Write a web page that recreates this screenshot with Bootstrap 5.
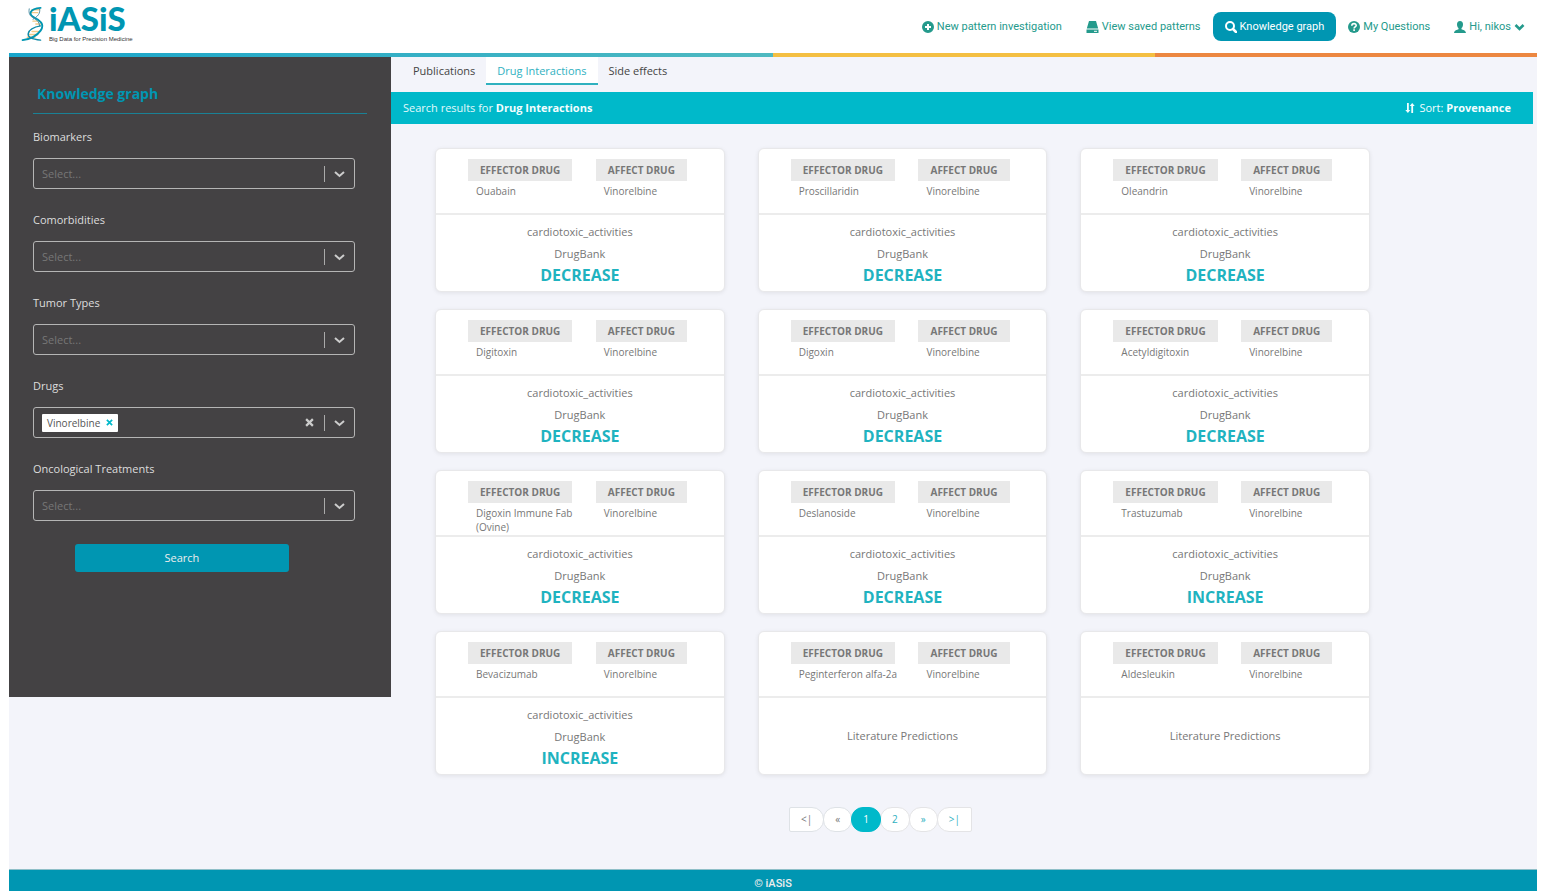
<!DOCTYPE html>
<html lang="en">
<head>
<meta charset="utf-8">
<meta name="viewport" content="width=device-width, initial-scale=1">
<title>iASiS - Knowledge graph</title>
<link rel="stylesheet" href="https://cdn.jsdelivr.net/npm/bootstrap@5.3.0/dist/css/bootstrap.min.css">
<style>
  :root { --deep: #0096b2; --aqua: #00b9ca; --page: #f3f4fa; --slate: #444244; }
  body { font-family: "Open Sans", sans-serif; font-size: 11px; line-height: 18px; color: #777; background: #fff; padding: 0 5px 5px 9px; }
  svg { flex: none; }
  svg:not([fill]) { fill: currentColor; }

  .topbar { height: 53px; }
  .brand { color: var(--deep); text-decoration: none; margin: 2px 0 0 12px; }
  .brand-name { font: 900 33px/33px Lato, sans-serif; }
  .brand-sub { font: 6px/8px "Liberation Sans Narrow", "Liberation Sans", sans-serif; color: #333; }
  .topnav .nav-link { display: flex; align-items: center; gap: 3px; height: 29px; padding: 0 12px; color: #249a8c; font: 11px/16px Roboto, sans-serif; }
  .topnav .nav-link.active { background: var(--deep); color: #fff; border-radius: 8px; }
  .stripe { height: 4px; }
  .stripe-a { background: linear-gradient(90deg, #18a5cb, #4fb9c0); }
  .stripe-b { background: #f4bf42; }
  .stripe-c { background: #ec8741; }

  .layout { background: var(--page); min-height: 812px; }
  .sidebar { background: var(--slate); min-height: 640px; padding: 24px 24px 0; color: #ddd; }
  .sidebar h1 { font-size: 14px; line-height: 26px; font-weight: 700; color: var(--deep); border-bottom: 1px solid #1a8196; padding: 0 4px 6px; margin: 0 0 14px; }
  .field { margin: 0 12px 22px 0; }
  .field label { line-height: 18px; margin-bottom: 12px; }
  .picker { height: 31px; border: 1px solid #b5b5b5; border-radius: 3px; background-color: transparent; color: #777; font-size: 11px; line-height: 18px;
    background-image: url("data:image/svg+xml,%3Csvg xmlns='http://www.w3.org/2000/svg' width='30' height='16'%3E%3Cpath d='M.5 0v16' stroke='%23aaa'/%3E%3Cpath d='M11 6l4.500 4 4.500-4' fill='none' stroke='%23ccc' stroke-width='2'/%3E%3C/svg%3E");
    background-size: 30px 16px; background-position: right 0 center; background-repeat: no-repeat; }
  select.picker { padding: 0 40px 0 8px; }
  .picker-multi { padding: 0 10px 0 8px; }
  .picker-multi input { width: 0; min-width: 0; background: none; border: 0; outline: 0; color: #ddd; }
  .chip { background: #fff; color: #555; font-size: 10px; line-height: 18px; border-radius: 1px; padding: 0 5px; gap: 6px; }
  .bare { background: none; border: 0; padding: 0; color: inherit; display: flex; }
  .chip .bare { color: var(--aqua); }
  .clear { margin-right: 30px; color: #ccc; }
  .btn-search { width: 64%; margin: 23px auto 0 42px; height: 28px; padding: 0; font-size: 11px; line-height: 18px; border-radius: 3px; background: var(--deep); color: #eee; }

  .tabs { padding-left: 12px; margin-bottom: 7px; }
  .tabs .nav-link { padding: 5px 11px 3px; height: 28px; color: #444; border-radius: 0; }
  .tabs .nav-item:first-child .nav-link { padding-left: 10px; }
  .tabs .nav-link.active { background: #fff; color: #2fb1bf; border-bottom: 2px solid #2fb1bf; padding-bottom: 1px; }
  .results-bar { background: var(--aqua); color: #e2fafc; height: 32px; margin-right: 4px; padding: 0 22px 0 12px; }
  .results-bar b, .results-bar .bare { color: #f2feff; }

  .results { padding-right: 167px; }
  .tiles { display: grid; grid-template-columns: repeat(3, minmax(0, 1fr)); gap: 17px 33px; margin: 24px 0 32px 44px; }
  .tile { height: 144px; border: 1px solid #e8e8ea; border-radius: 6px; box-shadow: 0 1px 4px rgba(0, 0, 0, .08); }
  .pair { display: grid; grid-template-columns: 1fr 1fr; height: 66px; padding: 10px 0 0 32px; border-bottom: 2px solid #ececec; }
  .tag { display: inline-block; background: #e9e9e9; font-size: 10px; font-weight: 700; line-height: 22px; padding: 0 12px; }
  .drug { font-size: 10px; line-height: 14px; padding: 3px 10px 0 8px; }
  .relation { line-height: 22px; }
  .effect { font-size: 16px; line-height: 20px; font-weight: 700; color: #1fb3c0; }

  .pagination { --bs-pagination-font-size: 10px; --bs-pagination-color: #2fb1bf; --bs-pagination-border-color: #e4e4e6; }
  .pagination .page-link { height: 25px; line-height: 23px; padding: 0 11px; border-radius: 12px; }
  .pagination .page-item:first-child .page-link { border-radius: 2px 12px 12px 2px; }
  .pagination .page-item:last-child .page-link { border-radius: 12px 2px 2px 12px; }
  .pagination .disabled .page-link { background: #fff; color: #777; }
  .pagination .active .page-link { background: var(--aqua); border-color: var(--aqua); }

  footer { background: var(--deep); border-top: 1px solid #8fbfc8; color: #eee; font: 500 11px/21px Roboto, sans-serif; height: 22px; padding-top: 3px; overflow: hidden; }
</style>
</head>
<body>
<header>
  <div class="topbar d-flex justify-content-between align-items-start">
    <a class="brand d-flex gap-1" href="#" aria-label="iASiS home">
      <svg class="mt-1" width="24" height="36" viewBox="0 0 24 38" fill="none" stroke-linecap="round">
        <g stroke="#f2c987" stroke-width="1.500"><path d="M11 4h8M10 7h7M12 16h7M15 19h5M11 27h7M8 30h9M6 33h8"/></g>
        <path d="M20 2C8 3 7 9 13 12s12 7 7 14S9 35 1 36" stroke="#0096b2" stroke-width="2"/>
        <path d="M8 3c-1 5 1 8 5 10s6 5 6 8M19 3c1 5-2 8-7 11" stroke="#4c8ea3" stroke-width="1"/>
        <path d="M20 21C14 22 8 25 7 29s4 6 13 7" stroke="#0f8aa8" stroke-width="1.500"/>
      </svg>
      <span class="d-flex flex-column"><span class="brand-name">iASiS</span><span class="brand-sub">Big Data for Precision Medicine</span></span>
    </a>
    <nav aria-label="Main">
      <ul class="nav topnav mt-2 pt-1 flex-nowrap text-nowrap">
        <li class="nav-item"><a class="nav-link" href="#"><svg width="12" height="12" viewBox="0 0 12 12"><path fill-rule="evenodd" d="M6 0a6 6 0 1 0 0 12A6 6 0 0 0 6 0zM5 3h2v2h2v2H7v2H5V7H3V5h2z"/></svg>New pattern investigation</a></li>
        <li class="nav-item"><a class="nav-link" href="#"><svg width="13" height="12" viewBox="0 0 12 12"><path d="M2.500 0h7l2.200 7.500H.3zM0 8.500h12V12H0z"/><path d="M7.500 10.300h3" stroke="#fff"/></svg>View saved patterns</a></li>
        <li class="nav-item"><a class="nav-link active" aria-current="page" href="#"><svg width="12" height="12" viewBox="0 0 12 12" fill="none" stroke="currentColor"><circle cx="5" cy="5" r="4" stroke-width="2"/><path d="M8 8l3 3" stroke-width="2.500" stroke-linecap="round"/></svg>Knowledge graph</a></li>
        <li class="nav-item"><a class="nav-link" href="#"><svg width="12" height="12" viewBox="0 0 12 12"><circle cx="6" cy="6" r="6"/><path d="M3.800 4.700C3.800 2 8.300 2 8.200 4.500 8.200 6 6.100 5.900 6.100 7.500M6.100 8.300v1.600" fill="none" stroke="#fff" stroke-width="1.600"/></svg>My Questions</a></li>
        <li class="nav-item"><a class="nav-link" href="#"><svg width="12" height="12" viewBox="0 0 12 12"><path d="M6 0c2 0 3 1.300 3 3.200 0 1.700-.5 3-1.500 3.900v1.200c1.500.7 4 1 4.500 3.700H0c.5-2.700 3-3 4.500-3.700V7.100C3.500 6.200 3 4.900 3 3.200 3 1.300 4 0 6 0z"/></svg>Hi, nikos<svg width="11" height="8" viewBox="0 0 10 8"><path d="M1 2l4 4 4-4" fill="none" stroke="currentColor" stroke-width="2.600"/></svg></a></li>
      </ul>
    </nav>
  </div>
  <div class="stripe d-flex"><div class="stripe-a w-50"></div><div class="stripe-b w-25"></div><div class="stripe-c w-25"></div></div>
</header>

<div class="layout row g-0 align-items-start">
  <aside class="sidebar col-3">
    <h1>Knowledge graph</h1>
    <form>
      <div class="field"><label class="d-block" for="biomarkers">Biomarkers</label><select class="form-select picker" id="biomarkers"><option>Select...</option></select></div>
      <div class="field"><label class="d-block" for="comorbidities">Comorbidities</label><select class="form-select picker" id="comorbidities"><option>Select...</option></select></div>
      <div class="field"><label class="d-block" for="tumors">Tumor Types</label><select class="form-select picker" id="tumors"><option>Select...</option></select></div>
      <div class="field"><label class="d-block" for="drugs">Drugs</label>
        <div class="picker picker-multi d-flex align-items-center">
          <span class="chip d-flex align-items-center">Vinorelbine<button class="bare" type="button" aria-label="Remove Vinorelbine"><svg width="7" height="7" viewBox="0 0 8 8"><path d="M1 1l6 6M7 1L1 7" stroke="currentColor" stroke-width="2"/></svg></button></span>
          <input class="flex-grow-1" id="drugs" type="text">
          <button class="bare clear" type="button" aria-label="Clear"><svg width="9" height="9" viewBox="0 0 8 8"><path d="M1 1l6 6M7 1L1 7" stroke="currentColor" stroke-width="2"/></svg></button>
        </div>
      </div>
      <div class="field"><label class="d-block" for="treatments">Oncological Treatments</label><select class="form-select picker" id="treatments"><option>Select...</option></select></div>
      <button class="btn btn-search d-block" type="submit">Search</button>
    </form>
  </aside>

  <main class="col-9">
    <ul class="nav tabs">
      <li class="nav-item"><a class="nav-link" href="#">Publications</a></li>
      <li class="nav-item"><a class="nav-link active" aria-current="page" href="#">Drug Interactions</a></li>
      <li class="nav-item"><a class="nav-link" href="#">Side effects</a></li>
    </ul>
    <div class="results-bar d-flex justify-content-between align-items-center">
      <span>Search results for <b>Drug Interactions</b></span>
      <button class="bare align-items-center gap-1" type="button"><svg width="10" height="10" viewBox="0 0 10 10"><path d="M2 0h1.800v7H5.300L2.900 10 .3 7H2zM6.300 10h1.800V3h1.600L7.200 0 4.700 3h1.600z"/></svg><span>Sort: <b>Provenance</b></span></button>
    </div>
    <div class="results">
      <div class="tiles" id="tiles"></div>
      <nav aria-label="Result pages">
        <ul class="pagination justify-content-center m-0">
          <li class="page-item disabled"><a class="page-link" href="#" aria-label="First">&lt;|</a></li>
          <li class="page-item disabled"><a class="page-link" href="#" aria-label="Previous">«</a></li>
          <li class="page-item active"><a class="page-link" href="#">1</a></li>
          <li class="page-item"><a class="page-link" href="#">2</a></li>
          <li class="page-item"><a class="page-link" href="#" aria-label="Next">»</a></li>
          <li class="page-item"><a class="page-link" href="#" aria-label="Last">&gt;|</a></li>
        </ul>
      </nav>
    </div>
  </main>
</div>
<footer class="text-center">© iASiS</footer>

<script src="https://cdn.jsdelivr.net/npm/bootstrap@5.3.0/dist/js/bootstrap.bundle.min.js"></script>
<script>
  const interactions = [
    ["Ouabain", "DECREASE"], ["Proscillaridin", "DECREASE"], ["Oleandrin", "DECREASE"],
    ["Digitoxin", "DECREASE"], ["Digoxin", "DECREASE"], ["Acetyldigitoxin", "DECREASE"],
    ["Digoxin Immune Fab (Ovine)", "DECREASE"], ["Deslanoside", "DECREASE"], ["Trastuzumab", "INCREASE"],
    ["Bevacizumab", "INCREASE"], ["Peginterferon alfa-2a", ""], ["Aldesleukin", ""]
  ];
  document.getElementById("tiles").innerHTML = interactions.map(([drug, effect]) => `
    <article class="tile bg-white d-flex flex-column">
      <div class="pair">
        <div><span class="tag">EFFECTOR DRUG</span><div class="drug">${drug}</div></div>
        <div><span class="tag">AFFECT DRUG</span><div class="drug">Vinorelbine</div></div>
      </div>
      <div class="relation flex-grow-1 d-flex flex-column justify-content-center text-center">
        ${effect ? `<div>cardiotoxic_activities</div><div>DrugBank</div><div class="effect">${effect}</div>` : `<div>Literature Predictions</div>`}
      </div>
    </article>`).join("");
</script>
</body>
</html>
